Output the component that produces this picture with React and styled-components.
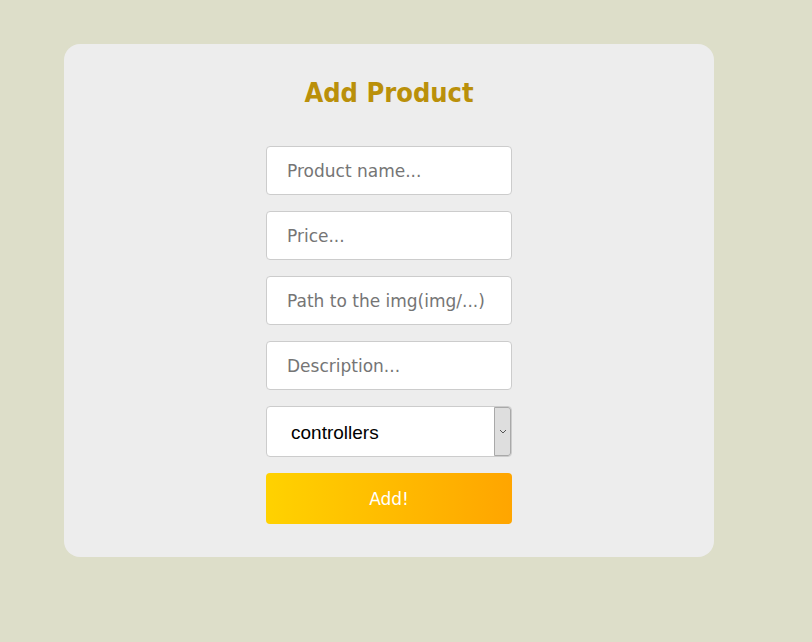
import React from 'react';
import styled, { createGlobalStyle } from 'styled-components';

const GlobalStyle = createGlobalStyle`
  body {
    margin: 0;
    background: #dddec9;
    font-family: "DejaVu Sans", Verdana, sans-serif;
  }
`;

const Page = styled.div`
  padding: 44px 98px 0 64px;
`;

const Card = styled.div`
  width: 650px;
  height: 513px;
  box-sizing: border-box;
  background: #ededed;
  border-radius: 16px;
  padding-top: 31px;
  display: flex;
  flex-direction: column;
  align-items: center;
`;

const Title = styled.h2`
  margin: 0 0 35px;
  font-family: "DejaVu Sans Condensed", "DejaVu Sans", Verdana, sans-serif;
  font-stretch: condensed;
  font-size: 27px;
  line-height: 36px;
  font-weight: bold;
  color: #ba900a;
`;

const Form = styled.form`
  width: 246px;
  display: flex;
  flex-direction: column;
  gap: 16px;
`;

const Input = styled.input`
  box-sizing: border-box;
  width: 100%;
  height: 49px;
  padding: 1px 20px 0;
  border: 1px solid #cccccc;
  border-radius: 4px;
  background: #fff;
  font-family: "DejaVu Sans", Verdana, sans-serif;
  font-size: 17px;
  color: #333;
  outline: none;

  &::placeholder {
    color: #757575;
  }
`;

const SelectWrap = styled.div`
  position: relative;
  height: 51px;
`;

const Select = styled.select`
  appearance: none;
  box-sizing: border-box;
  width: 100%;
  height: 100%;
  padding: 1px 24px 0;
  border: 1px solid #cccccc;
  border-radius: 4px;
  background: #fff;
  font-family: "Liberation Sans", Arial, sans-serif;
  font-size: 19px;
  color: #000;
  outline: none;
`;

const ArrowBox = styled.span`
  position: absolute;
  top: 1px;
  right: 1px;
  bottom: 1px;
  width: 17px;
  box-sizing: border-box;
  background: #dedede;
  border: 1px solid #a9a9a9;
  border-radius: 0 3px 3px 0;
  display: flex;
  align-items: center;
  justify-content: center;
  pointer-events: none;
`;

const Button = styled.button`
  height: 51px;
  border: none;
  border-radius: 4px;
  background: linear-gradient(to right, #ffd200, #ffa500);
  color: #fff;
  font-family: "DejaVu Sans", Verdana, sans-serif;
  font-size: 17px;
  cursor: pointer;
`;

const App = () => (
  <>
    <GlobalStyle />
    <Page>
      <Card>
        <Title>Add Product</Title>
        <Form onSubmit={(e) => e.preventDefault()}>
          <Input placeholder="Product name..." />
          <Input placeholder="Price..." />
          <Input placeholder="Path to the img(img/...)" />
          <Input placeholder="Description..." />
          <SelectWrap>
            <Select defaultValue="controllers">
              <option value="controllers">controllers</option>
              <option value="consoles">consoles</option>
              <option value="games">games</option>
            </Select>
            <ArrowBox>
              <svg width="8" height="5" viewBox="0 0 8 5">
                <path d="M1 1l3 3 3-3" fill="none" stroke="#555" strokeWidth="1" />
              </svg>
            </ArrowBox>
          </SelectWrap>
          <Button type="submit">Add!</Button>
        </Form>
      </Card>
    </Page>
  </>
);

export default App;
